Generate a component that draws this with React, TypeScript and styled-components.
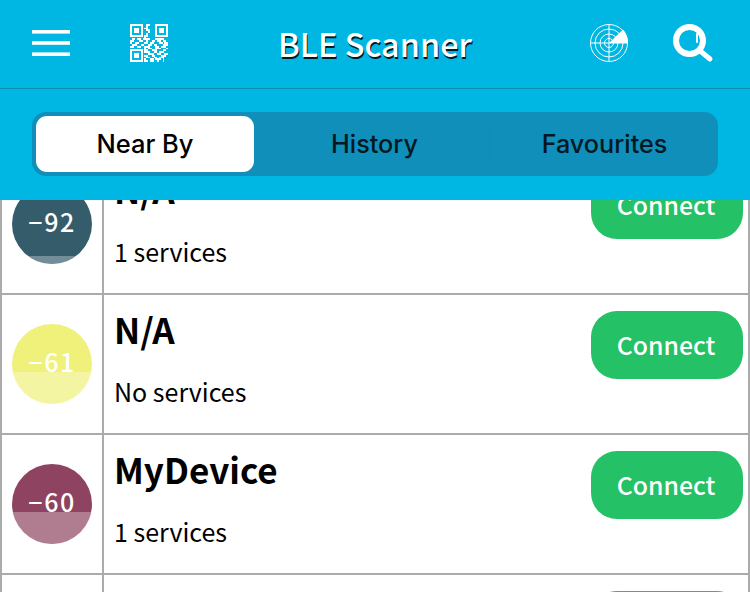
import React from 'react';
import styled, { createGlobalStyle } from 'styled-components';

const LIST_FONT = '"Noto Sans CJK JP", "Noto Sans", sans-serif';
const UI_FONT = 'Inter, "Liberation Sans", sans-serif';
const LINE = '#ababab';

type Device = {
  rssi: number,
  name: string,
  services: string,
  color: string,
  fill: number,
}

const devices: Device[] = [
  { rssi: -92, name: 'N/A', services: '1 services', color: '#355c6b', fill: 10 },
  { rssi: -61, name: 'N/A', services: 'No services', color: '#f0f17a', fill: 40 },
  { rssi: -60, name: 'MyDevice', services: '1 services', color: '#8e4460', fill: 40 },
];

const QR_ROWS = [
  '111111100110001111111',
  '100000100100001000001',
  '101110101100001011101',
  '101110100110001011101',
  '101110100010001011101',
  '100000100100001000001',
  '111111101100001111111',
  '000000001000000000000',
  '011011011110001111100',
  '110001100100110110110',
  '100110001101100011011',
  '011100110011011000111',
  '110011001110001101110',
  '000000001011001110001',
  '111111101100111000110',
  '100000101110011011100',
  '101110100011100110011',
  '101110101100110001110',
  '101110100110011011100',
  '100000101001101110100',
  '111111101101100100100',
];

const GlobalStyle = createGlobalStyle`
  html, body {
    margin: 0;
    padding: 0;
    background: #fff;
  }
`

const Page = styled.div`
  width: 750px;
  height: 592px;
  overflow: hidden;
  display: flex;
  flex-direction: column;
  background: #fff;
`

const Header = styled.header`
  flex: none;
  height: 200px;
  background: #00b6e2;
`

const TopBar = styled.div`
  height: 88px;
  box-sizing: border-box;
  display: flex;
  align-items: center;
  padding: 0 36px 2px 32px;
`

const Title = styled.h1`
  flex: 1;
  margin: 0;
  padding-right: 8px;
  text-align: center;
  font: 500 32.5px/40px ${LIST_FONT};
  color: #fff;
  text-shadow: 1px 2px 0 rgba(0, 0, 0, 0.85);
`

const Rule = styled.div`
  height: 1px;
  background: #0f8fb3;
`

const TabsWrap = styled.div`
  padding: 23px 32px 0;
`

const Tabs = styled.div`
  height: 64px;
  box-sizing: border-box;
  padding: 4px;
  display: grid;
  grid-template-columns: 218px 235px 1fr;
  border-radius: 14px;
  background: #0f8fba;
`

const ActiveTab = styled.div`
  display: flex;
  align-items: center;
  justify-content: center;
  border-radius: 11px;
  font: 450 25.5px/32px ${UI_FONT};
  color: #000;
  background: #fff;
`

const Tab = styled.div<{ $divider?: boolean }>`
  position: relative;
  display: flex;
  align-items: center;
  justify-content: center;
  padding-left: 6px;
  font: 450 25.2px/32px ${UI_FONT};
  color: #021821;

  &::before {
    content: '';
    display: ${(props) => (props.$divider ? 'block' : 'none')};
    position: absolute;
    left: 0;
    top: 12px;
    bottom: 12px;
    width: 1px;
    background: #1c85a8;
  }
`

const List = styled.div`
  flex: 1;
  min-height: 0;
  overflow: hidden;
`

// the list is scrolled, the first row sits partly under the header
const ScrollContent = styled.div`
  margin-top: -45px;
`

const Row = styled.div`
  height: 140px;
  box-sizing: border-box;
  display: grid;
  grid-template-columns: 102px 1fr auto;
  border: solid ${LINE};
  border-width: 0 2px 2px 2px;
`

const SignalCell = styled.div`
  display: flex;
  align-items: center;
  padding-left: 10px;
  border-right: 2px solid ${LINE};
`

const Signal = styled.div<{ $color: string }>`
  position: relative;
  width: 80px;
  height: 80px;
  box-sizing: border-box;
  padding-bottom: 6px;
  border-radius: 50%;
  overflow: hidden;
  display: flex;
  align-items: center;
  justify-content: center;
  background: ${(props) => props.$color};
  color: #fff;
  font: 500 25px/32px ${LIST_FONT};
  letter-spacing: 1.5px;
`

const SignalFill = styled.div`
  position: absolute;
  left: 0;
  right: 0;
  bottom: 0;
  background: rgba(255, 255, 255, 0.3);
`

const Info = styled.div`
  padding: 11px 0 0 10px;
`

const Name = styled.div`
  font: 700 35px/46px ${LIST_FONT};
  color: #000;
`

const Services = styled.div`
  margin-top: 23px;
  font: 400 25px/32px ${LIST_FONT};
  color: #000;
`

const ConnectCell = styled.div`
  padding: 16px 5px 0 0;
`

const ConnectButton = styled.div`
  width: 152px;
  height: 68px;
  box-sizing: border-box;
  padding: 0 2px 2px 0;
  border-radius: 26px;
  display: flex;
  align-items: center;
  justify-content: center;
  background: #24c166;
  color: #fff;
  font: 500 24.8px/32px ${LIST_FONT};
`

const MenuIcon = () => (
  <svg width="38" height="26" viewBox="0 0 38 26" fill="#fff">
    <rect y="0" width="38" height="3.6" />
    <rect y="11.2" width="38" height="3.6" />
    <rect y="22.4" width="38" height="3.6" />
  </svg>
);

const QrIcon = () => (
  <svg width="38" height="38" viewBox="0 0 21 21" fill="#fff" shapeRendering="crispEdges" style={{ marginLeft: 60 }}>
    {QR_ROWS.map((row, y) => (
      row.split('').map((cell, x) => (
        cell === '1' ? <rect key={x + '-' + y} x={x} y={y} width="1" height="1" /> : null
      ))
    ))}
  </svg>
);

const RadarIcon = () => (
  <svg width="38" height="38" viewBox="0 0 38 38" fill="none" stroke="#fff" strokeWidth="1">
    <circle cx="19" cy="19" r="18.5" />
    <circle cx="19" cy="19" r="14" />
    <circle cx="19" cy="19" r="9" />
    <circle cx="19" cy="19" r="4.5" />
    <path d="M19 0v38M0 19h38" />
    <path d="M19 19L33 5.5A19 19 0 0 1 38 19z" fill="#fff" stroke="none" />
  </svg>
);

const SearchIcon = () => (
  <svg width="42" height="44" viewBox="0 0 42 44" fill="none" stroke="#fff" style={{ marginLeft: 44 }}>
    <circle cx="17.5" cy="19.5" r="13.5" strokeWidth="6" />
    <path d="M27 29l11 9" strokeWidth="5" strokeLinecap="round" />
    <path d="M25 13v8" strokeWidth="2" strokeLinecap="round" />
  </svg>
);

const DeviceRow = ({ device }: { device: Device }) => (
  <Row>
    <SignalCell>
      <Signal $color={device.color}>
        <SignalFill style={{ height: device.fill + '%' }} />
        −{Math.abs(device.rssi)}
      </Signal>
    </SignalCell>
    <Info>
      <Name>{device.name}</Name>
      <Services>{device.services}</Services>
    </Info>
    <ConnectCell>
      <ConnectButton>Connect</ConnectButton>
    </ConnectCell>
  </Row>
);

const App = () => {
  return (
    <Page>
      <GlobalStyle />
      <Header>
        <TopBar>
          <MenuIcon />
          <QrIcon />
          <Title>BLE Scanner</Title>
          <RadarIcon />
          <SearchIcon />
        </TopBar>
        <Rule />
        <TabsWrap>
          <Tabs>
            <ActiveTab>Near By</ActiveTab>
            <Tab>History</Tab>
            <Tab $divider>Favourites</Tab>
          </Tabs>
        </TabsWrap>
      </Header>
      <List>
        <ScrollContent>
          {devices.map((device) => <DeviceRow key={device.rssi} device={device} />)}
          <Row>
            <SignalCell />
            <Info />
            <ConnectCell>
              <ConnectButton />
            </ConnectCell>
          </Row>
        </ScrollContent>
      </List>
    </Page>
  );
}

export default App;
